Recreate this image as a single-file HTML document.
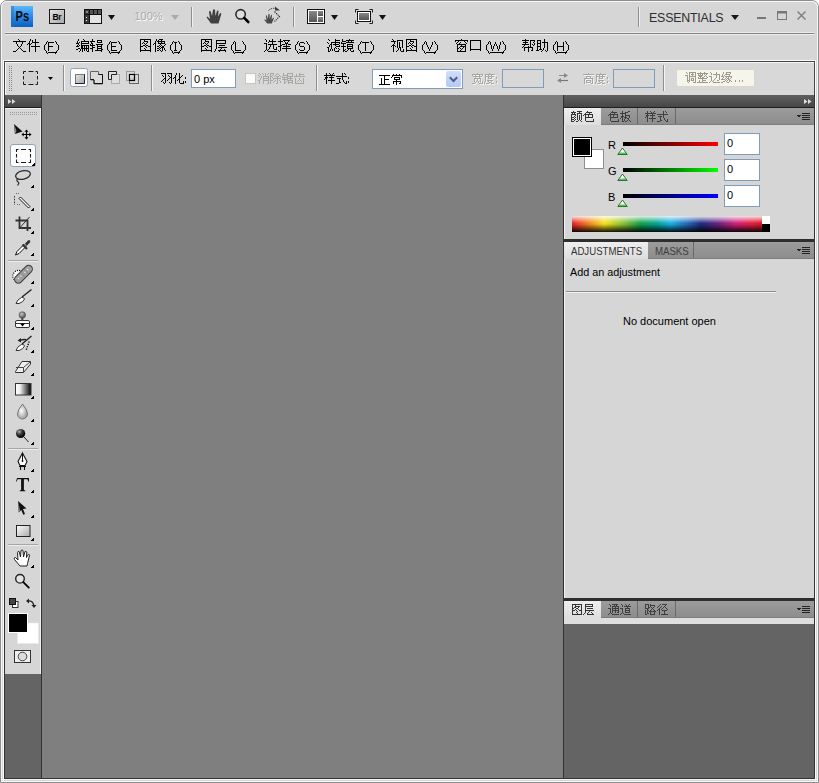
<!DOCTYPE html>
<html><head><meta charset="utf-8"><style>
html,body{margin:0;padding:0;width:819px;height:783px;overflow:hidden;background:#fff}
.a{position:absolute;display:block}
.t{position:absolute;white-space:nowrap;font-family:"Liberation Sans",sans-serif;line-height:1}
</style></head><body>
<div class="a" style="left:0px;top:0px;width:819px;height:783px;background:#d6d6d6;border:1px solid #8e8e8e;box-sizing:border-box;border-radius:7px 7px 0 0"></div><div class="a" style="left:1px;top:1px;width:817px;height:781px;border:1px solid #f6f6f6;border-bottom:none;box-sizing:border-box;border-radius:6px 6px 0 0"></div><div class="a" style="left:5px;top:32px;width:809px;height:1px;background:#ececec"></div><div class="a" style="left:5px;top:33px;width:809px;height:1px;background:#808080"></div><div class="a" style="left:5px;top:34px;width:809px;height:1px;background:#eeeeee"></div><div class="a" style="left:3px;top:60px;width:813px;height:722px;border:1px solid #fafafa;box-sizing:border-box"></div><div class="a" style="left:1px;top:779px;width:817px;height:1px;background:#f6f6f6"></div><div class="a" style="left:1px;top:781px;width:817px;height:1px;background:#f6f6f6"></div><div class="a" style="left:4px;top:61px;width:811px;height:34px;background:#d8d8d8;border:1px solid #464646;border-bottom:none;box-sizing:border-box"></div><div class="a" style="left:5px;top:62px;width:809px;height:1px;background:#f6f6f6"></div><div class="a" style="left:5px;top:62px;width:1px;height:33px;background:#f6f6f6"></div><div class="a" style="left:4px;top:95px;width:811px;height:684px;background:#333"></div><div class="a" style="left:5px;top:95px;width:36px;height:12px;background:linear-gradient(#5f5f5f,#474747)"></div><div class="a" style="left:5px;top:107px;width:36px;height:1px;background:#1e1e1e"></div><div class="a" style="left:5px;top:108px;width:36px;height:566px;background:#d6d6d6"></div><div class="a" style="left:5px;top:108px;width:35px;height:1px;background:#f2f2f2"></div><div class="a" style="left:40px;top:108px;width:1px;height:566px;background:#efefef"></div><div class="a" style="left:5px;top:674px;width:36px;height:104px;background:#646464"></div><div class="a" style="left:42px;top:95px;width:521px;height:683px;background:#7f7f7f"></div><div class="a" style="left:564px;top:95px;width:250px;height:12px;background:linear-gradient(#5f5f5f,#474747)"></div><div class="a" style="left:564px;top:107px;width:250px;height:1px;background:#1e1e1e"></div><div class="a" style="left:564px;top:108px;width:250px;height:17px;background:linear-gradient(#9c9c9c,#8c8c8c)"></div><div class="a" style="left:564px;top:124px;width:250px;height:1px;background:#7c7c7c"></div><div class="a" style="left:564px;top:108px;width:37px;height:17px;background:linear-gradient(#eeeeee,#dedede)"></div><svg class="a" style="left:571px;top:109px" width="29" height="19" shape-rendering="crispEdges"><path fill="#333" d="M2 2h1v1h-1zM6 2h5v1h-5zM16 2h1v1h-1zM0 3h5v1h-5zM8 3h1v1h-1zM15 3h6v1h-6zM1 4h1v1h-1zM3 4h1v1h-1zM6 4h5v1h-5zM14 4h1v1h-1zM18 4h1v1h-1zM0 5h5v1h-5zM6 5h1v1h-1zM10 5h1v1h-1zM13 5h9v1h-9zM0 6h1v1h-1zM4 6h1v1h-1zM6 6h1v1h-1zM8 6h1v1h-1zM10 6h1v1h-1zM12 6h1v1h-1zM14 6h1v1h-1zM17 6h1v1h-1zM21 6h1v1h-1zM0 7h1v1h-1zM3 7h1v1h-1zM6 7h1v1h-1zM8 7h1v1h-1zM10 7h1v1h-1zM14 7h1v1h-1zM17 7h1v1h-1zM21 7h1v1h-1zM0 8h3v1h-3zM4 8h1v1h-1zM6 8h1v1h-1zM8 8h1v1h-1zM10 8h1v1h-1zM14 8h8v1h-8zM0 9h1v1h-1zM3 9h1v1h-1zM6 9h1v1h-1zM8 9h1v1h-1zM10 9h1v1h-1zM14 9h1v1h-1zM0 10h3v1h-3zM4 10h1v1h-1zM6 10h1v1h-1zM8 10h1v1h-1zM10 10h1v1h-1zM14 10h1v1h-1zM22 10h1v1h-1zM0 11h1v1h-1zM3 11h1v1h-1zM7 11h1v1h-1zM9 11h1v1h-1zM14 11h1v1h-1zM22 11h1v1h-1zM0 12h3v1h-3zM5 12h2v1h-2zM10 12h1v1h-1zM15 12h8v1h-8z"/></svg><div class="a" style="left:637px;top:108px;width:1px;height:16px;background:#6a6a6a"></div><svg class="a" style="left:608px;top:109px" width="29" height="19" shape-rendering="crispEdges"><path fill="#3e3e3e" d="M4 2h1v1h-1zM14 2h1v1h-1zM20 2h2v1h-2zM3 3h6v1h-6zM14 3h1v1h-1zM17 3h3v1h-3zM2 4h1v1h-1zM6 4h1v1h-1zM12 4h6v1h-6zM1 5h9v1h-9zM14 5h1v1h-1zM17 5h1v1h-1zM0 6h1v1h-1zM2 6h1v1h-1zM5 6h1v1h-1zM9 6h1v1h-1zM14 6h1v1h-1zM17 6h5v1h-5zM2 7h1v1h-1zM5 7h1v1h-1zM9 7h1v1h-1zM13 7h3v1h-3zM17 7h1v1h-1zM21 7h1v1h-1zM2 8h8v1h-8zM13 8h2v1h-2zM16 8h3v1h-3zM21 8h1v1h-1zM2 9h1v1h-1zM12 9h1v1h-1zM14 9h1v1h-1zM17 9h1v1h-1zM19 9h2v1h-2zM2 10h1v1h-1zM10 10h1v1h-1zM14 10h1v1h-1zM16 10h1v1h-1zM20 10h1v1h-1zM2 11h1v1h-1zM10 11h1v1h-1zM14 11h1v1h-1zM16 11h1v1h-1zM19 11h1v1h-1zM21 11h1v1h-1zM3 12h8v1h-8zM14 12h2v1h-2zM17 12h2v1h-2zM22 12h1v1h-1z"/></svg><div class="a" style="left:675px;top:108px;width:1px;height:16px;background:#6a6a6a"></div><svg class="a" style="left:645px;top:109px" width="29" height="19" shape-rendering="crispEdges"><path fill="#3e3e3e" d="M2 2h1v1h-1zM5 2h1v1h-1zM9 2h1v1h-1zM18 2h1v1h-1zM20 2h1v1h-1zM2 3h1v1h-1zM6 3h1v1h-1zM8 3h1v1h-1zM18 3h1v1h-1zM21 3h1v1h-1zM0 4h11v1h-11zM18 4h1v1h-1zM2 5h1v1h-1zM7 5h1v1h-1zM12 5h11v1h-11zM1 6h3v1h-3zM5 6h5v1h-5zM18 6h1v1h-1zM1 7h2v1h-2zM7 7h1v1h-1zM13 7h4v1h-4zM18 7h1v1h-1zM0 8h1v1h-1zM2 8h1v1h-1zM7 8h1v1h-1zM15 8h1v1h-1zM18 8h1v1h-1zM2 9h1v1h-1zM4 9h7v1h-7zM15 9h1v1h-1zM19 9h1v1h-1zM2 10h1v1h-1zM7 10h1v1h-1zM15 10h1v1h-1zM19 10h1v1h-1zM22 10h1v1h-1zM2 11h1v1h-1zM7 11h1v1h-1zM15 11h2v1h-2zM20 11h1v1h-1zM22 11h1v1h-1zM2 12h1v1h-1zM7 12h1v1h-1zM12 12h3v1h-3zM21 12h2v1h-2z"/></svg><svg class="a" style="left:796px;top:112px" width="16" height="9" viewBox="0 0 16 9" shape-rendering="crispEdges"><path d="M0.5 3h5l-2.5 2.8z" fill="#222"/><path d="M6 1h8v1h-8zM6 3h8v1h-8zM6 5h8v1h-8zM6 7h8v1h-8z" fill="#222"/></svg><div class="a" style="left:564px;top:125px;width:250px;height:114px;background:#d6d6d6"></div><div class="a" style="left:564px;top:125px;width:1px;height:114px;background:#f2f2f2"></div><div class="a" style="left:564px;top:239px;width:250px;height:3px;background:#2e2e2e"></div><div class="a" style="left:564px;top:242px;width:250px;height:17px;background:linear-gradient(#9c9c9c,#8c8c8c)"></div><div class="a" style="left:564px;top:258px;width:250px;height:1px;background:#7c7c7c"></div><div class="a" style="left:564px;top:242px;width:84px;height:17px;background:linear-gradient(#eeeeee,#dedede)"></div><div class="t" style="left:571px;top:246px;color:#333;font-size:11px;transform:scaleX(0.875);transform-origin:0 0">ADJUSTMENTS</div><div class="a" style="left:693px;top:242px;width:1px;height:16px;background:#6a6a6a"></div><div class="t" style="left:655px;top:246px;color:#3e3e3e;font-size:11px;transform:scaleX(0.875);transform-origin:0 0">MASKS</div><svg class="a" style="left:796px;top:246px" width="16" height="9" viewBox="0 0 16 9" shape-rendering="crispEdges"><path d="M0.5 3h5l-2.5 2.8z" fill="#222"/><path d="M6 1h8v1h-8zM6 3h8v1h-8zM6 5h8v1h-8zM6 7h8v1h-8z" fill="#222"/></svg><div class="a" style="left:564px;top:259px;width:250px;height:339px;background:#d6d6d6"></div><div class="a" style="left:564px;top:259px;width:1px;height:339px;background:#f2f2f2"></div><div class="a" style="left:564px;top:598px;width:250px;height:3px;background:#2e2e2e"></div><div class="a" style="left:564px;top:601px;width:250px;height:17px;background:linear-gradient(#9c9c9c,#8c8c8c)"></div><div class="a" style="left:564px;top:617px;width:250px;height:1px;background:#7c7c7c"></div><div class="a" style="left:564px;top:601px;width:37px;height:17px;background:linear-gradient(#eeeeee,#dedede)"></div><svg class="a" style="left:571px;top:602px" width="29" height="19" shape-rendering="crispEdges"><path fill="#333" d="M1 2h10v1h-10zM14 2h8v1h-8zM1 3h1v1h-1zM4 3h1v1h-1zM10 3h1v1h-1zM14 3h1v1h-1zM21 3h1v1h-1zM1 4h1v1h-1zM4 4h5v1h-5zM10 4h1v1h-1zM14 4h8v1h-8zM1 5h1v1h-1zM3 5h2v1h-2zM7 5h1v1h-1zM10 5h1v1h-1zM14 5h1v1h-1zM1 6h2v1h-2zM5 6h2v1h-2zM10 6h1v1h-1zM14 6h1v1h-1zM16 6h6v1h-6zM1 7h1v1h-1zM4 7h1v1h-1zM7 7h1v1h-1zM10 7h1v1h-1zM14 7h1v1h-1zM1 8h3v1h-3zM5 8h1v1h-1zM8 8h3v1h-3zM14 8h9v1h-9zM1 9h1v1h-1zM6 9h1v1h-1zM10 9h1v1h-1zM14 9h1v1h-1zM18 9h1v1h-1zM1 10h1v1h-1zM5 10h1v1h-1zM10 10h1v1h-1zM14 10h1v1h-1zM17 10h1v1h-1zM20 10h1v1h-1zM1 11h1v1h-1zM6 11h1v1h-1zM10 11h1v1h-1zM13 11h1v1h-1zM16 11h1v1h-1zM21 11h1v1h-1zM1 12h10v1h-10zM12 12h1v1h-1zM16 12h7v1h-7z"/></svg><div class="a" style="left:637px;top:601px;width:1px;height:16px;background:#6a6a6a"></div><svg class="a" style="left:608px;top:602px" width="29" height="19" shape-rendering="crispEdges"><path fill="#3e3e3e" d="M1 2h1v1h-1zM4 2h6v1h-6zM13 2h1v1h-1zM17 2h1v1h-1zM21 2h1v1h-1zM2 3h1v1h-1zM6 3h1v1h-1zM8 3h1v1h-1zM14 3h1v1h-1zM18 3h1v1h-1zM20 3h1v1h-1zM2 4h1v1h-1zM4 4h7v1h-7zM14 4h1v1h-1zM16 4h7v1h-7zM4 5h1v1h-1zM7 5h1v1h-1zM10 5h1v1h-1zM19 5h1v1h-1zM0 6h3v1h-3zM4 6h7v1h-7zM12 6h3v1h-3zM17 6h5v1h-5zM2 7h1v1h-1zM4 7h1v1h-1zM7 7h1v1h-1zM10 7h1v1h-1zM14 7h1v1h-1zM17 7h1v1h-1zM21 7h1v1h-1zM2 8h1v1h-1zM4 8h7v1h-7zM14 8h1v1h-1zM17 8h5v1h-5zM2 9h1v1h-1zM4 9h1v1h-1zM7 9h1v1h-1zM10 9h1v1h-1zM14 9h1v1h-1zM17 9h1v1h-1zM21 9h1v1h-1zM2 10h1v1h-1zM4 10h1v1h-1zM7 10h1v1h-1zM9 10h2v1h-2zM14 10h1v1h-1zM17 10h5v1h-5zM1 11h1v1h-1zM3 11h1v1h-1zM13 11h1v1h-1zM15 11h1v1h-1zM0 12h1v1h-1zM4 12h7v1h-7zM12 12h1v1h-1zM16 12h7v1h-7z"/></svg><div class="a" style="left:675px;top:601px;width:1px;height:16px;background:#6a6a6a"></div><svg class="a" style="left:645px;top:602px" width="29" height="19" shape-rendering="crispEdges"><path fill="#3e3e3e" d="M0 2h4v1h-4zM5 2h1v1h-1zM15 2h1v1h-1zM17 2h5v1h-5zM0 3h1v1h-1zM3 3h1v1h-1zM5 3h5v1h-5zM14 3h1v1h-1zM20 3h1v1h-1zM0 4h1v1h-1zM3 4h1v1h-1zM5 4h1v1h-1zM9 4h1v1h-1zM13 4h1v1h-1zM16 4h1v1h-1zM19 4h1v1h-1zM0 5h1v1h-1zM3 5h2v1h-2zM6 5h1v1h-1zM8 5h1v1h-1zM12 5h1v1h-1zM15 5h1v1h-1zM18 5h1v1h-1zM20 5h1v1h-1zM0 6h4v1h-4zM7 6h1v1h-1zM14 6h1v1h-1zM17 6h1v1h-1zM21 6h1v1h-1zM2 7h1v1h-1zM6 7h1v1h-1zM8 7h1v1h-1zM13 7h2v1h-2zM16 7h1v1h-1zM22 7h1v1h-1zM0 8h1v1h-1zM2 8h2v1h-2zM5 8h1v1h-1zM9 8h1v1h-1zM12 8h1v1h-1zM14 8h1v1h-1zM17 8h5v1h-5zM0 9h1v1h-1zM2 9h1v1h-1zM4 9h7v1h-7zM14 9h1v1h-1zM19 9h1v1h-1zM0 10h1v1h-1zM2 10h1v1h-1zM5 10h1v1h-1zM9 10h1v1h-1zM14 10h1v1h-1zM19 10h1v1h-1zM0 11h1v1h-1zM2 11h2v1h-2zM5 11h1v1h-1zM9 11h1v1h-1zM14 11h1v1h-1zM19 11h1v1h-1zM0 12h2v1h-2zM5 12h5v1h-5zM14 12h1v1h-1zM16 12h7v1h-7z"/></svg><svg class="a" style="left:796px;top:605px" width="16" height="9" viewBox="0 0 16 9" shape-rendering="crispEdges"><path d="M0.5 3h5l-2.5 2.8z" fill="#222"/><path d="M6 1h8v1h-8zM6 3h8v1h-8zM6 5h8v1h-8zM6 7h8v1h-8z" fill="#222"/></svg><div class="a" style="left:564px;top:618px;width:250px;height:6px;background:#dedede"></div><div class="a" style="left:564px;top:624px;width:250px;height:154px;background:#646464"></div><svg class="a" style="left:8px;top:99px" width="8" height="5" viewBox="0 0 8 5" ><path d="M0 0l3.5 2.5L0 5zM4 0l3.5 2.5L4 5z" fill="#ddd"/></svg><svg class="a" style="left:804px;top:99px" width="8" height="5" viewBox="0 0 8 5" ><path d="M0 0l3.5 2.5L0 5zM4 0l3.5 2.5L4 5z" fill="#ddd"/></svg><div class="a" style="left:584px;top:149px;width:20px;height:20px;background:#fff;border:1px solid #8e8e8e;box-sizing:border-box"></div><div class="a" style="left:572px;top:137px;width:20px;height:20px;background:#000;box-shadow:inset 0 0 0 1px #000, inset 0 0 0 2px #fff"></div><div class="t" style="left:608px;top:140px;font-size:11px;color:#000">R</div><div class="a" style="left:623px;top:142px;width:95px;height:4px;background:linear-gradient(90deg,#000,#ff0000)"></div><svg class="a" style="left:617px;top:147px" width="11" height="8" viewBox="0 0 11 8" ><path d="M5.5 1L10.2 7.5H0.8Z" fill="#fff" stroke="#2e6e2e" stroke-width="1" stroke-linejoin="round"/><path d="M2 5.6h7v1.2h-7z" fill="#22c022"/></svg><div class="a" style="left:724px;top:133px;width:36px;height:22px;background:#fff;border:1px solid #7f9db9;box-sizing:border-box"></div><div class="t" style="left:727px;top:138px;font-size:11px;color:#000">0</div><div class="t" style="left:608px;top:166px;font-size:11px;color:#000">G</div><div class="a" style="left:623px;top:168px;width:95px;height:4px;background:linear-gradient(90deg,#000,#00ff00)"></div><svg class="a" style="left:617px;top:173px" width="11" height="8" viewBox="0 0 11 8" ><path d="M5.5 1L10.2 7.5H0.8Z" fill="#fff" stroke="#2e6e2e" stroke-width="1" stroke-linejoin="round"/><path d="M2 5.6h7v1.2h-7z" fill="#22c022"/></svg><div class="a" style="left:724px;top:159px;width:36px;height:22px;background:#fff;border:1px solid #7f9db9;box-sizing:border-box"></div><div class="t" style="left:727px;top:164px;font-size:11px;color:#000">0</div><div class="t" style="left:608px;top:192px;font-size:11px;color:#000">B</div><div class="a" style="left:623px;top:194px;width:95px;height:4px;background:linear-gradient(90deg,#000,#0000ff)"></div><svg class="a" style="left:617px;top:199px" width="11" height="8" viewBox="0 0 11 8" ><path d="M5.5 1L10.2 7.5H0.8Z" fill="#fff" stroke="#2e6e2e" stroke-width="1" stroke-linejoin="round"/><path d="M2 5.6h7v1.2h-7z" fill="#22c022"/></svg><div class="a" style="left:724px;top:185px;width:36px;height:22px;background:#fff;border:1px solid #7f9db9;box-sizing:border-box"></div><div class="t" style="left:727px;top:190px;font-size:11px;color:#000">0</div><div class="a" style="left:572px;top:216px;width:190px;height:16px;background:linear-gradient(90deg,#e8202a,#f07a22 8%,#f4e21c 17%,#8cc034 27%,#12a04a 36%,#00a596 45%,#18b0e6 52%,#2466b4 61%,#1e2c80 68%,#6a2280 77%,#d0207a 86%,#e2204c 93%,#d81a22)"></div><div class="a" style="left:572px;top:216px;width:190px;height:16px;background:linear-gradient(rgba(255,255,255,.85),rgba(255,255,255,0) 45%,rgba(0,0,0,0) 50%,rgba(0,0,0,.92))"></div><div class="a" style="left:762px;top:216px;width:8px;height:8px;background:#fff"></div><div class="a" style="left:762px;top:224px;width:8px;height:8px;background:#000"></div><div class="t" style="left:570px;top:267px;font-size:11px;color:#000;transform:scaleX(0.98);transform-origin:0 0">Add an adjustment</div><div class="a" style="left:566px;top:291px;width:210px;height:1px;background:#8e8e8e"></div><div class="a" style="left:566px;top:292px;width:210px;height:1px;background:#f0f0f0"></div><div class="t" style="left:623px;top:316px;font-size:11px;color:#000">No document open</div><svg class="a" style="left:0;top:0" width="819" height="783" viewBox="0 0 819 783"><defs>
<linearGradient id="psg" x1="0" y1="0" x2="0" y2="1"><stop offset="0" stop-color="#5ab8ff"/><stop offset=".5" stop-color="#2a8ae8"/><stop offset="1" stop-color="#0b5fc0"/></linearGradient>
<linearGradient id="brg" x1="0" y1="0" x2="1" y2="1"><stop offset="0" stop-color="#e6e6e6"/><stop offset="1" stop-color="#a6a6a6"/></linearGradient>
<linearGradient id="gg" x1="0" y1="0" x2="0" y2="1"><stop offset="0" stop-color="#888"/><stop offset="1" stop-color="#555"/></linearGradient>
<linearGradient id="wg" x1="0" y1="0" x2="1" y2="1"><stop offset="0" stop-color="#fff"/><stop offset="1" stop-color="#aaa"/></linearGradient>
<linearGradient id="hg" x1="0" y1="0" x2="1" y2="0"><stop offset="0" stop-color="#fff"/><stop offset=".3" stop-color="#eee"/><stop offset="1" stop-color="#000"/></linearGradient>
<radialGradient id="ball" cx=".35" cy=".3" r=".7"><stop offset="0" stop-color="#aaa"/><stop offset=".5" stop-color="#333"/><stop offset="1" stop-color="#000"/></radialGradient>
<radialGradient id="knob" cx=".4" cy=".35" r=".65"><stop offset="0" stop-color="#c8c8c8"/><stop offset="1" stop-color="#4a4a4a"/></radialGradient>
<radialGradient id="drop" cx=".4" cy=".45" r=".6"><stop offset="0" stop-color="#fff"/><stop offset="1" stop-color="#999"/></radialGradient>
</defs><rect x="11" y="6" width="22" height="21" fill="url(#psg)"/><rect x="11" y="6" width="3" height="21" fill="#1f6fc8" opacity=".5"/><text transform="translate(15.6 21) scale(0.8 1)" font-family="Liberation Sans" font-weight="bold" font-size="13.8" fill="#0a0a0a">Ps</text><rect x="49.5" y="9.5" width="15" height="14" fill="url(#brg)" stroke="#1a1a1a"/><text transform="translate(52.6 19.8) scale(0.9 1)" font-family="Liberation Sans" font-weight="bold" font-size="9.6" fill="#000">B</text><text transform="translate(58.2 19.8) scale(0.9 1)" font-family="Liberation Sans" font-weight="bold" font-size="9.6" fill="#111">r</text><rect x="84.5" y="9.5" width="17" height="14" fill="#e4e4e4" stroke="#111"/><rect x="85" y="10" width="16" height="4" fill="#555"/><rect x="85" y="10" width="4" height="13" fill="#3a3a3a"/><path d="M89 10h1v4h-1zM93 10h1v4h-1zM97 10h1v4h-1zM85 14h16v1h-16zM89 14h1v9h-1z" fill="#111"/><path d="M86 11h2v2h-2z" fill="#888"/><path d="M86 17h1v1h-1zM86 20h1v1h-1z" fill="#eee"/><path d="M108 15h7l-3.5 5z" fill="#111"/><text x="135.5" y="21" font-family="Liberation Sans" font-size="11" fill="#fff">100%</text><text x="134.5" y="20" font-family="Liberation Sans" font-size="11" fill="#a9a9a9">100%</text><path d="M171 15h8l-4 5z" fill="#aaa"/><rect x="191" y="7" width="1" height="20" fill="#8e8e8e"/><rect x="192" y="7" width="1" height="20" fill="#f0f0f0"/><rect x="293" y="7" width="1" height="20" fill="#8e8e8e"/><rect x="294" y="7" width="1" height="20" fill="#f0f0f0"/><rect x="638" y="7" width="1" height="20" fill="#8e8e8e"/><rect x="639" y="7" width="1" height="20" fill="#f0f0f0"/><path d="M211 23.5 L207 18 Q206 16.5 207.5 16.5 L210 19 L209 12 Q209 10.5 210.5 11 L212 16 L213 9.8 Q214 8.6 215 9.8 L215.5 16 L217 10.8 Q218.2 10 218.6 11.2 L218 16.5 L220 13.2 Q221.2 12.6 221.3 14 L219 22 L218.5 23.5 Z" fill="#414141"/><circle cx="240.6" cy="14.3" r="4.7" fill="#dedede" stroke="#2c2c2c" stroke-width="1.6"/><path d="M244.2 17.9 L248.3 22" stroke="#000" stroke-width="2.6" stroke-linecap="round"/><path d="M267.2 23.5 L264.5 20.2 Q264 19.2 265 19.4 L266.5 20.5 L265.8 15.8 Q266 15 266.8 15.4 L267.8 19 L268.4 14.2 Q269 13.5 269.6 14.2 L269.8 19 L271 15 Q271.8 14.6 272 15.4 L271.6 19.5 L273.3 17.8 Q274 17.6 273.9 18.4 L272.2 22.5 L271.8 23.5 Z" fill="#4a4a4a"/><path d="M268.5 10.5 Q271 8 275 8.3" fill="none" stroke="#333" stroke-width="1" stroke-dasharray="1.5 1"/><path d="M275 6.5 L280 10.5 L275 10.5 Z" fill="#3c3c3c"/><path d="M274.5 11.5 L279.5 16.5 L274.5 21.5" fill="none" stroke="#333" stroke-width="1.1" stroke-dasharray="1.4 0.8"/><rect x="307.5" y="9.5" width="17" height="14" fill="#fff" stroke="#111"/><rect x="309" y="11" width="8" height="11" fill="url(#gg)"/><rect x="318" y="11" width="5" height="5" fill="url(#gg)"/><rect x="318" y="17" width="5" height="5" fill="url(#gg)"/><path d="M331 15h7l-3.5 5z" fill="#111"/><path d="M355.5 12.5v-3h3M369.5 9.5h3v3M372.5 20.5v3h-3M358.5 23.5h-3v-3" fill="none" stroke="#222"/><rect x="357.5" y="11.5" width="13" height="10" fill="#fff" stroke="#111"/><rect x="359" y="13" width="10" height="7" fill="url(#gg)"/><path d="M379 15h7l-3.5 5z" fill="#111"/><path d="M731 15h8l-4 5z" fill="#1a1a1a"/><rect x="757" y="17" width="9" height="2" fill="#777"/><rect x="777.5" y="11.5" width="9" height="8" fill="none" stroke="#777"/><rect x="778" y="12" width="8" height="1.5" fill="#777"/><path d="M797.5 11.5 L805.5 19.5 M805.5 11.5 L797.5 19.5" stroke="#7a7a7a" stroke-width="1.3"/><rect x="9" y="66" width="1" height="1" fill="#888"/><rect x="11" y="66" width="1" height="1" fill="#888"/><rect x="9" y="68" width="1" height="1" fill="#888"/><rect x="11" y="68" width="1" height="1" fill="#888"/><rect x="9" y="70" width="1" height="1" fill="#888"/><rect x="11" y="70" width="1" height="1" fill="#888"/><rect x="9" y="72" width="1" height="1" fill="#888"/><rect x="11" y="72" width="1" height="1" fill="#888"/><rect x="9" y="74" width="1" height="1" fill="#888"/><rect x="11" y="74" width="1" height="1" fill="#888"/><rect x="9" y="76" width="1" height="1" fill="#888"/><rect x="11" y="76" width="1" height="1" fill="#888"/><rect x="9" y="78" width="1" height="1" fill="#888"/><rect x="11" y="78" width="1" height="1" fill="#888"/><rect x="9" y="80" width="1" height="1" fill="#888"/><rect x="11" y="80" width="1" height="1" fill="#888"/><rect x="9" y="82" width="1" height="1" fill="#888"/><rect x="11" y="82" width="1" height="1" fill="#888"/><rect x="9" y="84" width="1" height="1" fill="#888"/><rect x="11" y="84" width="1" height="1" fill="#888"/><rect x="9" y="86" width="1" height="1" fill="#888"/><rect x="11" y="86" width="1" height="1" fill="#888"/><rect x="9" y="88" width="1" height="1" fill="#888"/><rect x="11" y="88" width="1" height="1" fill="#888"/><rect x="9" y="90" width="1" height="1" fill="#888"/><rect x="11" y="90" width="1" height="1" fill="#888"/><rect x="24" y="72" width="13" height="12" fill="#d0d0d0"/><path d="M23.5 74V71.5H26M28.5 71.5H33.5M35.5 71.5H37.5V74M37.5 76V79.5M37.5 81.5V84.5H35.5M33.5 84.5H28.5M26 84.5H23.5V81.5M23.5 79.5V76" fill="none" stroke="#1a1a1a"/><path d="M48 77h5l-2.5 3z" fill="#000"/><rect x="63" y="65" width="1" height="26" fill="#8e8e8e"/><rect x="64" y="65" width="1" height="26" fill="#f4f4f4"/><rect x="151" y="65" width="1" height="26" fill="#8e8e8e"/><rect x="152" y="65" width="1" height="26" fill="#f4f4f4"/><rect x="316" y="65" width="1" height="26" fill="#8e8e8e"/><rect x="317" y="65" width="1" height="26" fill="#f4f4f4"/><rect x="663" y="65" width="1" height="26" fill="#8e8e8e"/><rect x="664" y="65" width="1" height="26" fill="#f4f4f4"/><rect x="70.5" y="68.5" width="17" height="18" rx="2" fill="#fdfdfd" stroke="#8ea4bb"/><rect x="75" y="74" width="10" height="10" fill="url(#brg)"/><path d="M75 83.5h9.5v-9.5" fill="none" stroke="#222"/><path d="M75.5 83v-8.5h9" fill="none" stroke="#777"/><path d="M90.5 71.5h8v3h4v9.5h-8.5v-4h-3.5z" fill="#dcdcdc" stroke="#666"/><path d="M98.5 74.5h4v9h-8.5v-3.5M90.5 79.5h3.5" fill="none" stroke="#111"/><rect x="111.5" y="74.5" width="8" height="9" fill="#dedede" stroke="#aaa"/><path d="M108.5 71.5h8v3h-5v5h-3z" fill="#e0e0e0" stroke="#222"/><rect x="126.5" y="71.5" width="8" height="9" fill="none" stroke="#999"/><rect x="129.5" y="74.5" width="9" height="9" fill="none" stroke="#666"/><rect x="129.5" y="74.5" width="5" height="6" fill="url(#wg)" stroke="#000" stroke-width="1.2"/><rect x="191.5" y="69.5" width="44" height="18" fill="#fff" stroke="#7f9db9"/><rect x="245.5" y="73.5" width="10" height="10" fill="#fbfbf8" stroke="#c9c7ba"/><rect x="372.5" y="69.5" width="90" height="19" fill="#fff" stroke="#7f9db9"/><defs><linearGradient id="selg" x1="0" y1="0" x2="0" y2="1"><stop offset="0" stop-color="#d2defa"/><stop offset="1" stop-color="#b4c8f2"/></linearGradient></defs><rect x="446" y="71" width="15" height="16" rx="2" fill="url(#selg)"/><path d="M449.8 77.2 L453.5 81 L457.2 77.2" fill="none" stroke="#4d6185" stroke-width="2"/><rect x="502.5" y="69.5" width="41" height="18" fill="#d8d8d8" stroke="#7f9db9"/><rect x="613.5" y="69.5" width="41" height="18" fill="#d8d8d8" stroke="#7f9db9"/><path d="M559 75.5h6" stroke="#8a8a8a" stroke-width="1"/><path d="M564 73 L568 75.5 L564 78z" fill="#8a8a8a"/><path d="M561 80.5h7" stroke="#777" stroke-width="1.2"/><path d="M561 78 L557 80.5 L561 83z" fill="#888"/><rect x="676.5" y="69.5" width="78" height="17" rx="2" fill="#f6f5ec" stroke="#d9d7ca"/><rect x="10" y="112" width="1" height="1" fill="#999"/><rect x="10" y="114" width="1" height="1" fill="#999"/><rect x="12" y="112" width="1" height="1" fill="#999"/><rect x="12" y="114" width="1" height="1" fill="#999"/><rect x="14" y="112" width="1" height="1" fill="#999"/><rect x="14" y="114" width="1" height="1" fill="#999"/><rect x="16" y="112" width="1" height="1" fill="#999"/><rect x="16" y="114" width="1" height="1" fill="#999"/><rect x="18" y="112" width="1" height="1" fill="#999"/><rect x="18" y="114" width="1" height="1" fill="#999"/><rect x="20" y="112" width="1" height="1" fill="#999"/><rect x="20" y="114" width="1" height="1" fill="#999"/><rect x="22" y="112" width="1" height="1" fill="#999"/><rect x="22" y="114" width="1" height="1" fill="#999"/><rect x="24" y="112" width="1" height="1" fill="#999"/><rect x="24" y="114" width="1" height="1" fill="#999"/><rect x="26" y="112" width="1" height="1" fill="#999"/><rect x="26" y="114" width="1" height="1" fill="#999"/><rect x="28" y="112" width="1" height="1" fill="#999"/><rect x="28" y="114" width="1" height="1" fill="#999"/><rect x="30" y="112" width="1" height="1" fill="#999"/><rect x="30" y="114" width="1" height="1" fill="#999"/><rect x="32" y="112" width="1" height="1" fill="#999"/><rect x="32" y="114" width="1" height="1" fill="#999"/><rect x="34" y="112" width="1" height="1" fill="#999"/><rect x="34" y="114" width="1" height="1" fill="#999"/><rect x="36" y="112" width="1" height="1" fill="#999"/><rect x="36" y="114" width="1" height="1" fill="#999"/><path d="M14 124 L22.5 131.5 L15 134 Z" fill="#111"/><path d="M14 124 L15 134 L16.5 131 Z" fill="#888"/><path d="M26.5 130v9M22 134.5h9" stroke="#000" stroke-width="1.2"/><path d="M26.5 129.5l-2 2.2h4zM26.5 139.5l-2-2.2h4zM21.5 134.5l2.2-2v4zM31.5 134.5l-2.2-2v4z" fill="#000"/><rect x="10.5" y="144.5" width="25" height="22" rx="2.5" fill="#fff" stroke="#8ea4bb"/><path d="M16.5 152V149.5H18.5M21 149.5H26M28.5 149.5H30.5V152M30.5 154V157.5M30.5 159.5V162.5H28.5M26 162.5H21M18.5 162.5H16.5V159.5M16.5 157.5V154" fill="none" stroke="#1a1a1a" stroke-width="1.1"/><path shape-rendering="crispEdges" d="M34 163h1v1h-1zM33 164h2v1h-2zM32 165h3v1h-3z" fill="#000"/><ellipse cx="23" cy="175" rx="7.5" ry="4.2" transform="rotate(-12 23 175)" fill="none" stroke="#2a2a2a" stroke-width="1.3"/><path d="M18 178.5 Q16 180 17.5 181.5 Q19.5 182.5 18.5 184 L17.5 185.5" fill="none" stroke="#2a2a2a" stroke-width="1.2"/><path shape-rendering="crispEdges" d="M33 185h1v1h-1zM32 186h2v1h-2zM31 187h3v1h-3z" fill="#000"/><path d="M14.5 196v9" stroke="#333" stroke-dasharray="1.5 1.3"/><path d="M16 193.5h3M17 204.5h3" stroke="#666" stroke-dasharray="1 1"/><path d="M19 198.5 L28.5 208 L30 206.5 L20.5 197 Z" fill="#fff" stroke="#111" stroke-width="1"/><path shape-rendering="crispEdges" d="M33 208h1v1h-1zM32 209h2v1h-2zM31 210h3v1h-3z" fill="#000"/><path d="M15.5 220.5h12v10.5M19.5 216.5v11.5h11.5" fill="none" stroke="#333" stroke-width="1.8"/><path d="M20.5 227 L29.5 217" stroke="#333" stroke-width="1"/><path shape-rendering="crispEdges" d="M33 231h1v1h-1zM32 232h2v1h-2zM31 233h3v1h-3z" fill="#000"/><path d="M15.5 255 L17 251.5 L24 244.5 L26 246.5 L19 253.5 Z" fill="#fff" stroke="#111" stroke-width="1" stroke-linejoin="round"/><path d="M22.5 244.5 L27 249" stroke="#333" stroke-width="2.2"/><path d="M25 243.5 L28 240.5 Q29.5 239.5 30.2 241 Q30.5 242 29.5 243 L26.5 246 Z" fill="#333"/><path shape-rendering="crispEdges" d="M33 253h1v1h-1zM32 254h2v1h-2zM31 255h3v1h-3z" fill="#000"/><rect x="8" y="260" width="30" height="1" fill="#a6a6a6"/><rect x="8" y="261" width="30" height="1" fill="#ececec"/><rect x="8" y="448" width="30" height="1" fill="#a6a6a6"/><rect x="8" y="449" width="30" height="1" fill="#ececec"/><rect x="8" y="544" width="30" height="1" fill="#a6a6a6"/><rect x="8" y="545" width="30" height="1" fill="#ececec"/><circle cx="18.5" cy="276" r="5.6" fill="#fff" stroke="#000" stroke-width="1.2" stroke-dasharray="1 1.2"/><rect x="12.5" y="270.5" width="22" height="7.5" rx="3.75" transform="rotate(-45 23.5 274.25)" fill="#a0a0a0" stroke="#3c3c3c" stroke-width="1"/><path d="M19.5 272 L25 277.5 M23 268.5 L28.5 274" stroke="#777" stroke-width=".8"/><circle cx="18.5" cy="278.5" r=".8" fill="#eee"/><circle cx="21" cy="276" r=".8" fill="#eee"/><circle cx="25" cy="272.2" r=".8" fill="#eee"/><circle cx="27.5" cy="269.5" r=".8" fill="#eee"/><path shape-rendering="crispEdges" d="M33 281h1v1h-1zM32 282h2v1h-2zM31 283h3v1h-3z" fill="#000"/><path d="M22 297 L31.5 289.5" stroke="#222" stroke-width="1.4"/><path d="M16 303.5 Q17.5 299 21.5 297.5 Q24 297 24.5 299 Q23.5 302 19 303.5 Z" fill="#fff" stroke="#333" stroke-width="1"/><path shape-rendering="crispEdges" d="M33 304h1v1h-1zM32 305h2v1h-2zM31 306h3v1h-3z" fill="#000"/><circle cx="22.3" cy="315" r="3.3" fill="url(#knob)" stroke="#555" stroke-width=".6"/><rect x="21.3" y="318" width="2" height="3" fill="#444"/><rect x="15.5" y="320.5" width="14" height="7" rx="1.5" fill="#fff" stroke="#333"/><path d="M15.5 323.5h14" stroke="#333"/><path d="M20 323.5h5l-2.5 3z" fill="#000"/><path shape-rendering="crispEdges" d="M33 327h1v1h-1zM32 328h2v1h-2zM31 329h3v1h-3z" fill="#000"/><path d="M20 340.3 Q23 339.2 26 339.6" fill="none" stroke="#222" stroke-width="1.3"/><path d="M17.5 340.5 L21 338 L21 342.5 Z" fill="#222"/><path d="M22 344 L31.5 336" stroke="#222" stroke-width="1.4"/><path d="M16 350.5 Q17.5 346 21.5 344.5 Q24 344 24.5 346 Q23.5 349 19 350.5 Z" fill="#fff" stroke="#333" stroke-width="1"/><path d="M29.2 341.5 L26.2 350" stroke="#000" stroke-dasharray="1.2 1.3" stroke-width="1.4"/><path shape-rendering="crispEdges" d="M33 350h1v1h-1zM32 351h2v1h-2zM31 352h3v1h-3z" fill="#000"/><path d="M15.5 371.5 L22 361.5 L30.5 361.5 L30.5 364 L23.5 372.5 L15.5 372.5 Z" fill="#eee" stroke="#333" stroke-width="1"/><path d="M16 367.5 L23.5 367.5 L30.5 361.5 M23.5 367.5 L23.5 372" fill="none" stroke="#444" stroke-width="1"/><path shape-rendering="crispEdges" d="M33 373h1v1h-1zM32 374h2v1h-2zM31 375h3v1h-3z" fill="#000"/><rect x="15.5" y="383.5" width="15.5" height="11.5" fill="url(#hg)" stroke="#333" stroke-width="1"/><path shape-rendering="crispEdges" d="M33 396h1v1h-1zM32 397h2v1h-2zM31 398h3v1h-3z" fill="#000"/><path d="M22.5 404 Q27.5 410 27.5 414 A5 5 0 0 1 17.5 414 Q17.5 410 22.5 404 Z" fill="url(#drop)" stroke="#777" stroke-width="1"/><path shape-rendering="crispEdges" d="M33 419h1v1h-1zM32 420h2v1h-2zM31 421h3v1h-3z" fill="#000"/><circle cx="20.6" cy="433.5" r="4.6" fill="url(#ball)"/><path d="M24 437 L28.5 442" stroke="#222" stroke-width="1"/><path shape-rendering="crispEdges" d="M33 442h1v1h-1zM32 443h2v1h-2zM31 444h3v1h-3z" fill="#000"/><path d="M22.5 453 L27 461.5 L25 465.5 L20 465.5 L18 461.5 Z" fill="#fff" stroke="#111" stroke-width="1.1"/><path d="M22.5 453 V460" stroke="#111"/><circle cx="22.5" cy="461" r=".9" fill="#000"/><path d="M19 466.5h7M20.5 467v3M24.5 467v3" stroke="#111" stroke-width="1.1"/><path shape-rendering="crispEdges" d="M33 469h1v1h-1zM32 470h2v1h-2zM31 471h3v1h-3z" fill="#000"/><path d="M17 478h12v3.5h-0.8l-0.7-2.2h-3.6v10.7l1.4 0.6v0.7h-5.6v-0.7l1.4-0.6v-10.7h-3.6l-0.7 2.2h-0.8z" fill="#111"/><path shape-rendering="crispEdges" d="M33 490h1v1h-1zM32 491h2v1h-2zM31 492h3v1h-3z" fill="#000"/><path d="M18 501 L26.5 508.5 L23 509 L25 514 L23.3 514.8 L21.2 510 L18.8 512.5 Z" fill="#111"/><path d="M18 501 L18.8 512.5 L20 510.5 Z" fill="#888"/><path shape-rendering="crispEdges" d="M33 515h1v1h-1zM32 516h2v1h-2zM31 517h3v1h-3z" fill="#000"/><rect x="16.5" y="525.5" width="13.5" height="11" fill="url(#wg)" stroke="#222" stroke-width="1"/><path shape-rendering="crispEdges" d="M33 538h1v1h-1zM32 539h2v1h-2zM31 540h3v1h-3z" fill="#000"/><path d="M20 566 L14.5 559.5 Q13.5 557.5 15.5 557.5 L18 560 L17.5 552.5 Q17.8 551 19.2 551.6 L20.5 557 L21 550.5 Q22 549.5 23 550.5 L23.5 557 L25 551.5 Q26.2 550.8 26.8 552 L26.5 557.5 L28.3 554.5 Q29.5 554 29.6 555.3 L27.5 563.5 L27 566 Z" fill="#fff" stroke="#222" stroke-width="1"/><path shape-rendering="crispEdges" d="M33 565h1v1h-1zM32 566h2v1h-2zM31 567h3v1h-3z" fill="#000"/><circle cx="20" cy="578.8" r="4.3" fill="#e4e4e4" stroke="#222" stroke-width="1.4"/><path d="M23.3 582.2 L28.8 587.6" stroke="#000" stroke-width="1.8" stroke-linecap="round"/><rect x="12.5" y="601.5" width="5.5" height="6" fill="#fff" stroke="#333"/><rect x="9" y="598" width="7" height="7" fill="#111"/><rect x="10" y="599" width="5" height="5" fill="#444"/><path d="M27.5 601 Q33 600 34 606" fill="none" stroke="#222" stroke-width="1.4"/><path d="M26 601 L29 598.5 L29 603.5 Z M34 608 L31.5 605 L36.5 605 Z" fill="#222"/><rect x="17.5" y="623" width="21" height="20.5" fill="#fff" stroke="#e8e8e8" stroke-width=".5"/><rect x="8.5" y="613.5" width="19" height="19" fill="#000" stroke="#fff" stroke-width="1"/><rect x="14.5" y="650.5" width="16" height="12" fill="#eee" stroke="#333"/><circle cx="22.5" cy="656.5" r="4.3" fill="#ddd" stroke="#444"/></svg><div class="t" style="left:649px;top:12px;font-size:12.4px;color:#2e2e2e;letter-spacing:-0.2px">ESSENTIALS</div><svg class="a" style="left:13px;top:37px" width="33" height="21" shape-rendering="crispEdges"><path fill="#000" d="M5 2h1v1h-1zM17 2h1v1h-1zM22 2h1v1h-1zM6 3h1v1h-1zM17 3h1v1h-1zM19 3h1v1h-1zM22 3h1v1h-1zM0 4h13v1h-13zM16 4h1v1h-1zM19 4h1v1h-1zM22 4h1v1h-1zM3 5h1v1h-1zM9 5h1v1h-1zM16 5h1v1h-1zM19 5h7v1h-7zM3 6h1v1h-1zM9 6h1v1h-1zM15 6h2v1h-2zM18 6h1v1h-1zM22 6h1v1h-1zM4 7h1v1h-1zM8 7h1v1h-1zM14 7h1v1h-1zM16 7h2v1h-2zM22 7h1v1h-1zM4 8h1v1h-1zM8 8h1v1h-1zM16 8h1v1h-1zM22 8h1v1h-1zM5 9h1v1h-1zM7 9h1v1h-1zM16 9h1v1h-1zM18 9h9v1h-9zM6 10h1v1h-1zM16 10h1v1h-1zM22 10h1v1h-1zM5 11h1v1h-1zM7 11h1v1h-1zM16 11h1v1h-1zM22 11h1v1h-1zM4 12h1v1h-1zM8 12h1v1h-1zM16 12h1v1h-1zM22 12h1v1h-1zM3 13h1v1h-1zM9 13h1v1h-1zM16 13h1v1h-1zM22 13h1v1h-1zM0 14h3v1h-3zM10 14h3v1h-3zM16 14h1v1h-1zM22 14h1v1h-1z"/></svg><svg class="a" style="left:0;top:0" width="600" height="60" shape-rendering="crispEdges"><path fill="#000" d="M47 41h1v1h-1zM46 42h1v1h-1zM46 43h1v1h-1zM45 44h1v1h-1zM44 45h1v1h-1zM44 46h1v1h-1zM44 47h1v1h-1zM44 48h1v1h-1zM44 49h1v1h-1zM45 50h1v1h-1zM46 51h1v1h-1zM46 52h1v1h-1zM47 53h1v1h-1zM48 42h6v1h-6zM48 43h1v1h-1zM48 44h1v1h-1zM48 45h1v1h-1zM48 46h5v1h-5zM48 47h1v1h-1zM48 48h1v1h-1zM48 49h1v1h-1zM48 50h1v1h-1zM48 52h8v1h-8zM55 41h1v1h-1zM56 42h1v1h-1zM56 43h1v1h-1zM57 44h1v1h-1zM58 45h1v1h-1zM58 46h1v1h-1zM58 47h1v1h-1zM58 48h1v1h-1zM58 49h1v1h-1zM57 50h1v1h-1zM56 51h1v1h-1zM56 52h1v1h-1zM55 53h1v1h-1z"/></svg><svg class="a" style="left:76px;top:37px" width="33" height="21" shape-rendering="crispEdges"><path fill="#000" d="M2 2h1v1h-1zM7 2h1v1h-1zM16 2h1v1h-1zM2 3h1v1h-1zM8 3h1v1h-1zM16 3h1v1h-1zM21 3h5v1h-5zM1 4h1v1h-1zM5 4h8v1h-8zM14 4h5v1h-5zM21 4h1v1h-1zM25 4h1v1h-1zM1 5h1v1h-1zM3 5h1v1h-1zM5 5h1v1h-1zM12 5h1v1h-1zM15 5h1v1h-1zM21 5h5v1h-5zM0 6h3v1h-3zM5 6h8v1h-8zM15 6h2v1h-2zM2 7h1v1h-1zM5 7h1v1h-1zM14 7h1v1h-1zM16 7h1v1h-1zM20 7h7v1h-7zM1 8h1v1h-1zM3 8h1v1h-1zM5 8h8v1h-8zM14 8h5v1h-5zM21 8h1v1h-1zM25 8h1v1h-1zM0 9h3v1h-3zM5 9h2v1h-2zM8 9h1v1h-1zM10 9h1v1h-1zM12 9h1v1h-1zM16 9h1v1h-1zM21 9h5v1h-5zM5 10h2v1h-2zM8 10h1v1h-1zM10 10h1v1h-1zM12 10h1v1h-1zM16 10h3v1h-3zM21 10h1v1h-1zM25 10h1v1h-1zM2 11h2v1h-2zM5 11h8v1h-8zM14 11h3v1h-3zM21 11h5v1h-5zM0 12h2v1h-2zM4 12h1v1h-1zM6 12h1v1h-1zM8 12h1v1h-1zM10 12h1v1h-1zM12 12h1v1h-1zM16 12h1v1h-1zM21 12h1v1h-1zM25 12h2v1h-2zM4 13h1v1h-1zM6 13h1v1h-1zM8 13h1v1h-1zM10 13h1v1h-1zM12 13h1v1h-1zM16 13h1v1h-1zM19 13h7v1h-7zM3 14h1v1h-1zM6 14h1v1h-1zM11 14h2v1h-2zM16 14h1v1h-1zM25 14h1v1h-1z"/></svg><svg class="a" style="left:0;top:0" width="600" height="60" shape-rendering="crispEdges"><path fill="#000" d="M110 41h1v1h-1zM109 42h1v1h-1zM109 43h1v1h-1zM108 44h1v1h-1zM107 45h1v1h-1zM107 46h1v1h-1zM107 47h1v1h-1zM107 48h1v1h-1zM107 49h1v1h-1zM108 50h1v1h-1zM109 51h1v1h-1zM109 52h1v1h-1zM110 53h1v1h-1zM111 42h6v1h-6zM111 43h1v1h-1zM111 44h1v1h-1zM111 45h1v1h-1zM111 46h5v1h-5zM111 47h1v1h-1zM111 48h1v1h-1zM111 49h1v1h-1zM111 50h6v1h-6zM111 52h8v1h-8zM118 41h1v1h-1zM119 42h1v1h-1zM119 43h1v1h-1zM120 44h1v1h-1zM121 45h1v1h-1zM121 46h1v1h-1zM121 47h1v1h-1zM121 48h1v1h-1zM121 49h1v1h-1zM120 50h1v1h-1zM119 51h1v1h-1zM119 52h1v1h-1zM118 53h1v1h-1z"/></svg><svg class="a" style="left:139px;top:37px" width="33" height="21" shape-rendering="crispEdges"><path fill="#000" d="M1 2h11v1h-11zM17 2h1v1h-1zM20 2h4v1h-4zM1 3h1v1h-1zM5 3h1v1h-1zM11 3h1v1h-1zM17 3h1v1h-1zM19 3h1v1h-1zM22 3h1v1h-1zM1 4h1v1h-1zM5 4h4v1h-4zM11 4h1v1h-1zM16 4h1v1h-1zM18 4h8v1h-8zM1 5h1v1h-1zM4 5h1v1h-1zM8 5h1v1h-1zM11 5h1v1h-1zM16 5h1v1h-1zM19 5h1v1h-1zM22 5h1v1h-1zM25 5h1v1h-1zM1 6h1v1h-1zM3 6h1v1h-1zM5 6h1v1h-1zM7 6h1v1h-1zM11 6h1v1h-1zM15 6h2v1h-2zM19 6h7v1h-7zM1 7h1v1h-1zM6 7h1v1h-1zM11 7h1v1h-1zM14 7h1v1h-1zM16 7h1v1h-1zM21 7h1v1h-1zM26 7h1v1h-1zM1 8h1v1h-1zM4 8h2v1h-2zM7 8h2v1h-2zM11 8h1v1h-1zM16 8h1v1h-1zM20 8h1v1h-1zM22 8h1v1h-1zM25 8h1v1h-1zM1 9h3v1h-3zM6 9h1v1h-1zM9 9h3v1h-3zM16 9h1v1h-1zM18 9h2v1h-2zM21 9h1v1h-1zM23 9h2v1h-2zM1 10h1v1h-1zM7 10h1v1h-1zM11 10h1v1h-1zM16 10h1v1h-1zM20 10h1v1h-1zM22 10h3v1h-3zM1 11h1v1h-1zM5 11h1v1h-1zM11 11h1v1h-1zM16 11h1v1h-1zM18 11h2v1h-2zM21 11h1v1h-1zM23 11h1v1h-1zM25 11h1v1h-1zM1 12h1v1h-1zM6 12h1v1h-1zM11 12h1v1h-1zM16 12h1v1h-1zM20 12h1v1h-1zM23 12h1v1h-1zM25 12h1v1h-1zM1 13h11v1h-11zM16 13h1v1h-1zM18 13h2v1h-2zM21 13h1v1h-1zM23 13h1v1h-1zM26 13h1v1h-1zM1 14h1v1h-1zM11 14h1v1h-1zM16 14h1v1h-1zM22 14h1v1h-1z"/></svg><svg class="a" style="left:0;top:0" width="600" height="60" shape-rendering="crispEdges"><path fill="#000" d="M173 41h1v1h-1zM172 42h1v1h-1zM172 43h1v1h-1zM171 44h1v1h-1zM170 45h1v1h-1zM170 46h1v1h-1zM170 47h1v1h-1zM170 48h1v1h-1zM170 49h1v1h-1zM171 50h1v1h-1zM172 51h1v1h-1zM172 52h1v1h-1zM173 53h1v1h-1zM174 42h3v1h-3zM175 43h1v1h-1zM175 44h1v1h-1zM175 45h1v1h-1zM175 46h1v1h-1zM175 47h1v1h-1zM175 48h1v1h-1zM175 49h1v1h-1zM174 50h3v1h-3zM174 52h5v1h-5zM178 41h1v1h-1zM179 42h1v1h-1zM179 43h1v1h-1zM180 44h1v1h-1zM181 45h1v1h-1zM181 46h1v1h-1zM181 47h1v1h-1zM181 48h1v1h-1zM181 49h1v1h-1zM180 50h1v1h-1zM179 51h1v1h-1zM179 52h1v1h-1zM178 53h1v1h-1z"/></svg><svg class="a" style="left:200px;top:37px" width="33" height="21" shape-rendering="crispEdges"><path fill="#000" d="M1 2h11v1h-11zM1 3h1v1h-1zM5 3h1v1h-1zM11 3h1v1h-1zM16 3h10v1h-10zM1 4h1v1h-1zM5 4h4v1h-4zM11 4h1v1h-1zM16 4h1v1h-1zM25 4h1v1h-1zM1 5h1v1h-1zM4 5h1v1h-1zM8 5h1v1h-1zM11 5h1v1h-1zM16 5h1v1h-1zM25 5h1v1h-1zM1 6h1v1h-1zM3 6h1v1h-1zM5 6h1v1h-1zM7 6h1v1h-1zM11 6h1v1h-1zM16 6h10v1h-10zM1 7h1v1h-1zM6 7h1v1h-1zM11 7h1v1h-1zM16 7h1v1h-1zM1 8h1v1h-1zM4 8h2v1h-2zM7 8h2v1h-2zM11 8h1v1h-1zM16 8h1v1h-1zM19 8h6v1h-6zM1 9h3v1h-3zM6 9h1v1h-1zM9 9h3v1h-3zM16 9h1v1h-1zM1 10h1v1h-1zM7 10h1v1h-1zM11 10h1v1h-1zM16 10h1v1h-1zM18 10h9v1h-9zM1 11h1v1h-1zM5 11h1v1h-1zM11 11h1v1h-1zM16 11h1v1h-1zM21 11h1v1h-1zM1 12h1v1h-1zM6 12h1v1h-1zM11 12h1v1h-1zM15 12h1v1h-1zM20 12h1v1h-1zM24 12h1v1h-1zM1 13h11v1h-11zM15 13h1v1h-1zM18 13h8v1h-8zM1 14h1v1h-1zM11 14h1v1h-1zM14 14h1v1h-1zM19 14h1v1h-1zM25 14h1v1h-1z"/></svg><svg class="a" style="left:0;top:0" width="600" height="60" shape-rendering="crispEdges"><path fill="#000" d="M234 41h1v1h-1zM233 42h1v1h-1zM233 43h1v1h-1zM232 44h1v1h-1zM231 45h1v1h-1zM231 46h1v1h-1zM231 47h1v1h-1zM231 48h1v1h-1zM231 49h1v1h-1zM232 50h1v1h-1zM233 51h1v1h-1zM233 52h1v1h-1zM234 53h1v1h-1zM235 42h1v1h-1zM235 43h1v1h-1zM235 44h1v1h-1zM235 45h1v1h-1zM235 46h1v1h-1zM235 47h1v1h-1zM235 48h1v1h-1zM235 49h1v1h-1zM235 50h6v1h-6zM235 52h8v1h-8zM242 41h1v1h-1zM243 42h1v1h-1zM243 43h1v1h-1zM244 44h1v1h-1zM245 45h1v1h-1zM245 46h1v1h-1zM245 47h1v1h-1zM245 48h1v1h-1zM245 49h1v1h-1zM244 50h1v1h-1zM243 51h1v1h-1zM243 52h1v1h-1zM242 53h1v1h-1z"/></svg><svg class="a" style="left:264px;top:37px" width="33" height="21" shape-rendering="crispEdges"><path fill="#000" d="M1 2h1v1h-1zM8 2h1v1h-1zM16 2h1v1h-1zM2 3h1v1h-1zM5 3h1v1h-1zM8 3h1v1h-1zM16 3h1v1h-1zM19 3h7v1h-7zM2 4h1v1h-1zM5 4h7v1h-7zM14 4h5v1h-5zM20 4h1v1h-1zM24 4h1v1h-1zM4 5h1v1h-1zM8 5h1v1h-1zM16 5h1v1h-1zM21 5h1v1h-1zM23 5h1v1h-1zM0 6h3v1h-3zM8 6h1v1h-1zM16 6h1v1h-1zM21 6h3v1h-3zM2 7h1v1h-1zM4 7h9v1h-9zM16 7h1v1h-1zM18 7h3v1h-3zM22 7h1v1h-1zM24 7h3v1h-3zM2 8h1v1h-1zM6 8h1v1h-1zM9 8h1v1h-1zM16 8h2v1h-2zM22 8h1v1h-1zM2 9h1v1h-1zM6 9h1v1h-1zM9 9h1v1h-1zM14 9h3v1h-3zM19 9h7v1h-7zM2 10h1v1h-1zM5 10h1v1h-1zM9 10h1v1h-1zM12 10h1v1h-1zM16 10h1v1h-1zM22 10h1v1h-1zM2 11h1v1h-1zM5 11h1v1h-1zM9 11h1v1h-1zM12 11h1v1h-1zM16 11h1v1h-1zM18 11h9v1h-9zM2 12h1v1h-1zM4 12h1v1h-1zM10 12h3v1h-3zM16 12h1v1h-1zM22 12h1v1h-1zM1 13h1v1h-1zM3 13h1v1h-1zM14 13h1v1h-1zM16 13h1v1h-1zM22 13h1v1h-1zM0 14h1v1h-1zM4 14h9v1h-9zM15 14h1v1h-1zM22 14h1v1h-1z"/></svg><svg class="a" style="left:0;top:0" width="600" height="60" shape-rendering="crispEdges"><path fill="#000" d="M298 41h1v1h-1zM297 42h1v1h-1zM297 43h1v1h-1zM296 44h1v1h-1zM295 45h1v1h-1zM295 46h1v1h-1zM295 47h1v1h-1zM295 48h1v1h-1zM295 49h1v1h-1zM296 50h1v1h-1zM297 51h1v1h-1zM297 52h1v1h-1zM298 53h1v1h-1zM300 42h4v1h-4zM299 43h1v1h-1zM304 43h1v1h-1zM299 44h1v1h-1zM299 45h1v1h-1zM300 46h4v1h-4zM304 47h1v1h-1zM304 48h1v1h-1zM299 49h1v1h-1zM304 49h1v1h-1zM300 50h4v1h-4zM299 52h8v1h-8zM306 41h1v1h-1zM307 42h1v1h-1zM307 43h1v1h-1zM308 44h1v1h-1zM309 45h1v1h-1zM309 46h1v1h-1zM309 47h1v1h-1zM309 48h1v1h-1zM309 49h1v1h-1zM308 50h1v1h-1zM307 51h1v1h-1zM307 52h1v1h-1zM306 53h1v1h-1z"/></svg><svg class="a" style="left:327px;top:37px" width="33" height="21" shape-rendering="crispEdges"><path fill="#000" d="M1 2h1v1h-1zM8 2h1v1h-1zM15 2h1v1h-1zM22 2h1v1h-1zM2 3h1v1h-1zM8 3h5v1h-5zM15 3h1v1h-1zM19 3h8v1h-8zM8 4h1v1h-1zM15 4h4v1h-4zM21 4h1v1h-1zM24 4h1v1h-1zM0 5h1v1h-1zM4 5h9v1h-9zM14 5h1v1h-1zM19 5h8v1h-8zM1 6h1v1h-1zM4 6h1v1h-1zM8 6h1v1h-1zM12 6h1v1h-1zM14 6h5v1h-5zM3 7h2v1h-2zM6 7h6v1h-6zM16 7h1v1h-1zM20 7h6v1h-6zM2 8h1v1h-1zM4 8h1v1h-1zM8 8h1v1h-1zM12 8h1v1h-1zM16 8h1v1h-1zM20 8h1v1h-1zM25 8h1v1h-1zM2 9h1v1h-1zM4 9h1v1h-1zM9 9h4v1h-4zM14 9h5v1h-5zM20 9h6v1h-6zM0 10h2v1h-2zM4 10h1v1h-1zM8 10h1v1h-1zM16 10h1v1h-1zM20 10h1v1h-1zM25 10h1v1h-1zM1 11h1v1h-1zM4 11h1v1h-1zM7 11h1v1h-1zM9 11h1v1h-1zM11 11h1v1h-1zM16 11h1v1h-1zM20 11h6v1h-6zM1 12h1v1h-1zM3 12h1v1h-1zM5 12h1v1h-1zM7 12h1v1h-1zM12 12h1v1h-1zM16 12h1v1h-1zM18 12h1v1h-1zM21 12h1v1h-1zM23 12h1v1h-1zM1 13h1v1h-1zM3 13h1v1h-1zM5 13h1v1h-1zM7 13h1v1h-1zM11 13h1v1h-1zM16 13h2v1h-2zM20 13h1v1h-1zM23 13h1v1h-1zM26 13h1v1h-1zM1 14h2v1h-2zM8 14h4v1h-4zM16 14h1v1h-1zM18 14h2v1h-2zM24 14h3v1h-3z"/></svg><svg class="a" style="left:0;top:0" width="600" height="60" shape-rendering="crispEdges"><path fill="#000" d="M361 41h1v1h-1zM360 42h1v1h-1zM360 43h1v1h-1zM359 44h1v1h-1zM358 45h1v1h-1zM358 46h1v1h-1zM358 47h1v1h-1zM358 48h1v1h-1zM358 49h1v1h-1zM359 50h1v1h-1zM360 51h1v1h-1zM360 52h1v1h-1zM361 53h1v1h-1zM362 42h7v1h-7zM365 43h1v1h-1zM365 44h1v1h-1zM365 45h1v1h-1zM365 46h1v1h-1zM365 47h1v1h-1zM365 48h1v1h-1zM365 49h1v1h-1zM365 50h1v1h-1zM362 52h9v1h-9zM370 41h1v1h-1zM371 42h1v1h-1zM371 43h1v1h-1zM372 44h1v1h-1zM373 45h1v1h-1zM373 46h1v1h-1zM373 47h1v1h-1zM373 48h1v1h-1zM373 49h1v1h-1zM372 50h1v1h-1zM371 51h1v1h-1zM371 52h1v1h-1zM370 53h1v1h-1z"/></svg><svg class="a" style="left:391px;top:37px" width="33" height="21" shape-rendering="crispEdges"><path fill="#000" d="M1 2h1v1h-1zM15 2h11v1h-11zM2 3h1v1h-1zM6 3h6v1h-6zM15 3h1v1h-1zM19 3h1v1h-1zM25 3h1v1h-1zM0 4h5v1h-5zM6 4h1v1h-1zM11 4h1v1h-1zM15 4h1v1h-1zM19 4h4v1h-4zM25 4h1v1h-1zM3 5h1v1h-1zM6 5h1v1h-1zM8 5h1v1h-1zM11 5h1v1h-1zM15 5h1v1h-1zM18 5h1v1h-1zM22 5h1v1h-1zM25 5h1v1h-1zM3 6h1v1h-1zM6 6h1v1h-1zM8 6h1v1h-1zM11 6h1v1h-1zM15 6h1v1h-1zM17 6h1v1h-1zM19 6h1v1h-1zM21 6h1v1h-1zM25 6h1v1h-1zM2 7h1v1h-1zM6 7h1v1h-1zM8 7h1v1h-1zM11 7h1v1h-1zM15 7h1v1h-1zM20 7h1v1h-1zM25 7h1v1h-1zM1 8h3v1h-3zM6 8h1v1h-1zM8 8h1v1h-1zM11 8h1v1h-1zM15 8h1v1h-1zM18 8h2v1h-2zM21 8h2v1h-2zM25 8h1v1h-1zM0 9h1v1h-1zM2 9h1v1h-1zM4 9h1v1h-1zM6 9h1v1h-1zM8 9h1v1h-1zM11 9h1v1h-1zM15 9h3v1h-3zM20 9h1v1h-1zM23 9h3v1h-3zM2 10h1v1h-1zM6 10h1v1h-1zM8 10h2v1h-2zM11 10h1v1h-1zM15 10h1v1h-1zM21 10h1v1h-1zM25 10h1v1h-1zM2 11h1v1h-1zM7 11h1v1h-1zM9 11h1v1h-1zM15 11h1v1h-1zM19 11h1v1h-1zM25 11h1v1h-1zM2 12h1v1h-1zM7 12h1v1h-1zM9 12h1v1h-1zM12 12h1v1h-1zM15 12h1v1h-1zM20 12h1v1h-1zM25 12h1v1h-1zM2 13h1v1h-1zM6 13h1v1h-1zM9 13h1v1h-1zM12 13h1v1h-1zM15 13h11v1h-11zM2 14h1v1h-1zM5 14h1v1h-1zM10 14h3v1h-3zM15 14h1v1h-1zM25 14h1v1h-1z"/></svg><svg class="a" style="left:0;top:0" width="600" height="60" shape-rendering="crispEdges"><path fill="#000" d="M425 41h1v1h-1zM424 42h1v1h-1zM424 43h1v1h-1zM423 44h1v1h-1zM422 45h1v1h-1zM422 46h1v1h-1zM422 47h1v1h-1zM422 48h1v1h-1zM422 49h1v1h-1zM423 50h1v1h-1zM424 51h1v1h-1zM424 52h1v1h-1zM425 53h1v1h-1zM426 42h1v1h-1zM432 42h1v1h-1zM426 43h1v1h-1zM432 43h1v1h-1zM426 44h1v1h-1zM432 44h1v1h-1zM427 45h1v1h-1zM431 45h1v1h-1zM427 46h1v1h-1zM431 46h1v1h-1zM428 47h1v1h-1zM430 47h1v1h-1zM428 48h1v1h-1zM430 48h1v1h-1zM429 49h1v1h-1zM429 50h1v1h-1zM426 52h9v1h-9zM434 41h1v1h-1zM435 42h1v1h-1zM435 43h1v1h-1zM436 44h1v1h-1zM437 45h1v1h-1zM437 46h1v1h-1zM437 47h1v1h-1zM437 48h1v1h-1zM437 49h1v1h-1zM436 50h1v1h-1zM435 51h1v1h-1zM435 52h1v1h-1zM434 53h1v1h-1z"/></svg><svg class="a" style="left:455px;top:37px" width="33" height="21" shape-rendering="crispEdges"><path fill="#000" d="M6 2h1v1h-1zM0 3h13v1h-13zM15 3h11v1h-11zM0 4h1v1h-1zM3 4h1v1h-1zM9 4h1v1h-1zM12 4h1v1h-1zM15 4h1v1h-1zM25 4h1v1h-1zM2 5h1v1h-1zM5 5h1v1h-1zM10 5h1v1h-1zM15 5h1v1h-1zM25 5h1v1h-1zM1 6h1v1h-1zM4 6h1v1h-1zM11 6h1v1h-1zM15 6h1v1h-1zM25 6h1v1h-1zM2 7h9v1h-9zM15 7h1v1h-1zM25 7h1v1h-1zM2 8h1v1h-1zM6 8h1v1h-1zM10 8h1v1h-1zM15 8h1v1h-1zM25 8h1v1h-1zM2 9h1v1h-1zM5 9h6v1h-6zM15 9h1v1h-1zM25 9h1v1h-1zM2 10h1v1h-1zM4 10h1v1h-1zM8 10h1v1h-1zM10 10h1v1h-1zM15 10h1v1h-1zM25 10h1v1h-1zM2 11h2v1h-2zM5 11h1v1h-1zM7 11h1v1h-1zM10 11h1v1h-1zM15 11h1v1h-1zM25 11h1v1h-1zM2 12h1v1h-1zM6 12h1v1h-1zM10 12h1v1h-1zM15 12h11v1h-11zM2 13h1v1h-1zM5 13h1v1h-1zM10 13h1v1h-1zM15 13h1v1h-1zM25 13h1v1h-1zM2 14h9v1h-9z"/></svg><svg class="a" style="left:0;top:0" width="600" height="60" shape-rendering="crispEdges"><path fill="#000" d="M489 41h1v1h-1zM488 42h1v1h-1zM488 43h1v1h-1zM487 44h1v1h-1zM486 45h1v1h-1zM486 46h1v1h-1zM486 47h1v1h-1zM486 48h1v1h-1zM486 49h1v1h-1zM487 50h1v1h-1zM488 51h1v1h-1zM488 52h1v1h-1zM489 53h1v1h-1zM490 42h1v1h-1zM495 42h1v1h-1zM500 42h1v1h-1zM490 43h1v1h-1zM495 43h1v1h-1zM500 43h1v1h-1zM490 44h1v1h-1zM494 44h1v1h-1zM496 44h1v1h-1zM500 44h1v1h-1zM491 45h1v1h-1zM494 45h1v1h-1zM496 45h1v1h-1zM499 45h1v1h-1zM491 46h1v1h-1zM493 46h1v1h-1zM497 46h1v1h-1zM499 46h1v1h-1zM491 47h1v1h-1zM493 47h1v1h-1zM497 47h1v1h-1zM499 47h1v1h-1zM491 48h1v1h-1zM493 48h1v1h-1zM497 48h1v1h-1zM499 48h1v1h-1zM492 49h1v1h-1zM498 49h1v1h-1zM492 50h1v1h-1zM498 50h1v1h-1zM490 52h13v1h-13zM502 41h1v1h-1zM503 42h1v1h-1zM503 43h1v1h-1zM504 44h1v1h-1zM505 45h1v1h-1zM505 46h1v1h-1zM505 47h1v1h-1zM505 48h1v1h-1zM505 49h1v1h-1zM504 50h1v1h-1zM503 51h1v1h-1zM503 52h1v1h-1zM502 53h1v1h-1z"/></svg><svg class="a" style="left:522px;top:37px" width="33" height="21" shape-rendering="crispEdges"><path fill="#000" d="M3 2h1v1h-1zM22 2h1v1h-1zM0 3h7v1h-7zM8 3h5v1h-5zM15 3h4v1h-4zM22 3h1v1h-1zM3 4h1v1h-1zM8 4h1v1h-1zM12 4h1v1h-1zM15 4h1v1h-1zM18 4h1v1h-1zM22 4h1v1h-1zM1 5h5v1h-5zM8 5h1v1h-1zM11 5h1v1h-1zM15 5h1v1h-1zM18 5h1v1h-1zM20 5h6v1h-6zM3 6h1v1h-1zM8 6h1v1h-1zM12 6h1v1h-1zM15 6h4v1h-4zM22 6h1v1h-1zM25 6h1v1h-1zM0 7h7v1h-7zM8 7h1v1h-1zM10 7h1v1h-1zM12 7h1v1h-1zM15 7h1v1h-1zM18 7h1v1h-1zM22 7h1v1h-1zM25 7h1v1h-1zM2 8h1v1h-1zM8 8h1v1h-1zM11 8h1v1h-1zM15 8h1v1h-1zM18 8h1v1h-1zM22 8h1v1h-1zM25 8h1v1h-1zM1 9h1v1h-1zM6 9h1v1h-1zM8 9h1v1h-1zM15 9h4v1h-4zM22 9h1v1h-1zM25 9h1v1h-1zM0 10h1v1h-1zM2 10h9v1h-9zM15 10h1v1h-1zM18 10h1v1h-1zM22 10h1v1h-1zM25 10h1v1h-1zM2 11h1v1h-1zM6 11h1v1h-1zM10 11h1v1h-1zM15 11h1v1h-1zM18 11h1v1h-1zM21 11h1v1h-1zM25 11h1v1h-1zM2 12h1v1h-1zM6 12h1v1h-1zM10 12h1v1h-1zM15 12h1v1h-1zM17 12h3v1h-3zM21 12h1v1h-1zM25 12h1v1h-1zM2 13h1v1h-1zM6 13h1v1h-1zM9 13h2v1h-2zM14 13h3v1h-3zM20 13h1v1h-1zM23 13h1v1h-1zM25 13h1v1h-1zM6 14h1v1h-1zM19 14h1v1h-1zM24 14h1v1h-1z"/></svg><svg class="a" style="left:0;top:0" width="600" height="60" shape-rendering="crispEdges"><path fill="#000" d="M556 41h1v1h-1zM555 42h1v1h-1zM555 43h1v1h-1zM554 44h1v1h-1zM553 45h1v1h-1zM553 46h1v1h-1zM553 47h1v1h-1zM553 48h1v1h-1zM553 49h1v1h-1zM554 50h1v1h-1zM555 51h1v1h-1zM555 52h1v1h-1zM556 53h1v1h-1zM557 42h1v1h-1zM563 42h1v1h-1zM557 43h1v1h-1zM563 43h1v1h-1zM557 44h1v1h-1zM563 44h1v1h-1zM557 45h1v1h-1zM563 45h1v1h-1zM557 46h7v1h-7zM557 47h1v1h-1zM563 47h1v1h-1zM557 48h1v1h-1zM563 48h1v1h-1zM557 49h1v1h-1zM563 49h1v1h-1zM557 50h1v1h-1zM563 50h1v1h-1zM557 52h9v1h-9zM565 41h1v1h-1zM566 42h1v1h-1zM566 43h1v1h-1zM567 44h1v1h-1zM568 45h1v1h-1zM568 46h1v1h-1zM568 47h1v1h-1zM568 48h1v1h-1zM568 49h1v1h-1zM567 50h1v1h-1zM566 51h1v1h-1zM566 52h1v1h-1zM565 53h1v1h-1z"/></svg><svg class="a" style="left:161px;top:71px" width="32" height="19" shape-rendering="crispEdges"><path fill="#000" d="M0 2h5v1h-5zM6 2h5v1h-5zM15 2h1v1h-1zM18 2h1v1h-1zM4 3h1v1h-1zM10 3h1v1h-1zM15 3h1v1h-1zM18 3h1v1h-1zM1 4h1v1h-1zM4 4h1v1h-1zM7 4h1v1h-1zM10 4h1v1h-1zM14 4h1v1h-1zM18 4h1v1h-1zM21 4h1v1h-1zM2 5h1v1h-1zM4 5h1v1h-1zM8 5h1v1h-1zM10 5h1v1h-1zM14 5h1v1h-1zM18 5h1v1h-1zM20 5h1v1h-1zM4 6h1v1h-1zM9 6h2v1h-2zM13 6h2v1h-2zM18 6h2v1h-2zM24 6h1v1h-1zM3 7h2v1h-2zM8 7h1v1h-1zM10 7h1v1h-1zM12 7h1v1h-1zM14 7h1v1h-1zM18 7h1v1h-1zM24 7h1v1h-1zM2 8h1v1h-1zM4 8h1v1h-1zM7 8h1v1h-1zM10 8h1v1h-1zM14 8h1v1h-1zM17 8h2v1h-2zM1 9h1v1h-1zM4 9h1v1h-1zM6 9h1v1h-1zM10 9h1v1h-1zM14 9h1v1h-1zM16 9h1v1h-1zM18 9h1v1h-1zM0 10h1v1h-1zM4 10h1v1h-1zM10 10h1v1h-1zM14 10h1v1h-1zM18 10h1v1h-1zM22 10h1v1h-1zM24 10h1v1h-1zM2 11h1v1h-1zM4 11h1v1h-1zM8 11h1v1h-1zM10 11h1v1h-1zM14 11h1v1h-1zM18 11h1v1h-1zM22 11h1v1h-1zM24 11h1v1h-1zM3 12h1v1h-1zM9 12h1v1h-1zM14 12h1v1h-1zM19 12h4v1h-4z"/></svg><div class="t" style="left:194px;top:74px;font-size:11px;color:#000">0 px</div><svg class="a" style="left:258px;top:71px" width="53" height="19" shape-rendering="crispEdges"><path fill="#a8a8a0" d="M1 2h1v1h-1zM4 2h1v1h-1zM7 2h1v1h-1zM10 2h1v1h-1zM12 2h4v1h-4zM19 2h1v1h-1zM25 2h1v1h-1zM29 2h6v1h-6zM41 2h1v1h-1zM2 3h1v1h-1zM5 3h1v1h-1zM7 3h1v1h-1zM9 3h1v1h-1zM12 3h1v1h-1zM15 3h1v1h-1zM18 3h1v1h-1zM20 3h1v1h-1zM25 3h1v1h-1zM29 3h1v1h-1zM34 3h1v1h-1zM38 3h1v1h-1zM41 3h5v1h-5zM0 4h1v1h-1zM7 4h1v1h-1zM12 4h1v1h-1zM14 4h1v1h-1zM17 4h1v1h-1zM21 4h1v1h-1zM25 4h5v1h-5zM34 4h1v1h-1zM38 4h1v1h-1zM41 4h1v1h-1zM1 5h1v1h-1zM3 5h1v1h-1zM5 5h6v1h-6zM12 5h2v1h-2zM16 5h1v1h-1zM18 5h3v1h-3zM22 5h1v1h-1zM24 5h1v1h-1zM29 5h6v1h-6zM36 5h11v1h-11zM3 6h1v1h-1zM5 6h1v1h-1zM10 6h1v1h-1zM12 6h1v1h-1zM14 6h1v1h-1zM19 6h1v1h-1zM24 6h6v1h-6zM32 6h1v1h-1zM2 7h1v1h-1zM5 7h6v1h-6zM12 7h1v1h-1zM15 7h8v1h-8zM26 7h1v1h-1zM29 7h6v1h-6zM37 7h1v1h-1zM41 7h1v1h-1zM45 7h1v1h-1zM2 8h1v1h-1zM5 8h1v1h-1zM10 8h1v1h-1zM12 8h1v1h-1zM15 8h1v1h-1zM19 8h1v1h-1zM24 8h6v1h-6zM32 8h1v1h-1zM37 8h1v1h-1zM41 8h1v1h-1zM45 8h1v1h-1zM0 9h2v1h-2zM5 9h6v1h-6zM12 9h3v1h-3zM17 9h1v1h-1zM19 9h1v1h-1zM21 9h1v1h-1zM26 9h1v1h-1zM29 9h6v1h-6zM37 9h1v1h-1zM40 9h1v1h-1zM42 9h1v1h-1zM45 9h1v1h-1zM1 10h1v1h-1zM5 10h1v1h-1zM10 10h1v1h-1zM12 10h1v1h-1zM16 10h1v1h-1zM19 10h1v1h-1zM22 10h1v1h-1zM26 10h1v1h-1zM28 10h1v1h-1zM30 10h1v1h-1zM34 10h1v1h-1zM37 10h1v1h-1zM39 10h1v1h-1zM43 10h1v1h-1zM45 10h1v1h-1zM1 11h1v1h-1zM5 11h1v1h-1zM10 11h1v1h-1zM12 11h1v1h-1zM15 11h1v1h-1zM19 11h1v1h-1zM22 11h1v1h-1zM26 11h2v1h-2zM30 11h5v1h-5zM37 11h1v1h-1zM45 11h1v1h-1zM1 12h1v1h-1zM5 12h1v1h-1zM9 12h2v1h-2zM12 12h1v1h-1zM18 12h2v1h-2zM26 12h1v1h-1zM30 12h1v1h-1zM34 12h1v1h-1zM37 12h9v1h-9z"/></svg><svg class="a" style="left:324px;top:71px" width="32" height="19" shape-rendering="crispEdges"><path fill="#000" d="M2 2h1v1h-1zM5 2h1v1h-1zM9 2h1v1h-1zM18 2h1v1h-1zM20 2h1v1h-1zM2 3h1v1h-1zM6 3h1v1h-1zM8 3h1v1h-1zM18 3h1v1h-1zM21 3h1v1h-1zM0 4h11v1h-11zM18 4h1v1h-1zM2 5h1v1h-1zM7 5h1v1h-1zM12 5h11v1h-11zM1 6h3v1h-3zM5 6h5v1h-5zM18 6h1v1h-1zM24 6h1v1h-1zM1 7h2v1h-2zM7 7h1v1h-1zM13 7h4v1h-4zM18 7h1v1h-1zM24 7h1v1h-1zM0 8h1v1h-1zM2 8h1v1h-1zM7 8h1v1h-1zM15 8h1v1h-1zM18 8h1v1h-1zM2 9h1v1h-1zM4 9h7v1h-7zM15 9h1v1h-1zM19 9h1v1h-1zM2 10h1v1h-1zM7 10h1v1h-1zM15 10h1v1h-1zM19 10h1v1h-1zM22 10h1v1h-1zM24 10h1v1h-1zM2 11h1v1h-1zM7 11h1v1h-1zM15 11h2v1h-2zM20 11h1v1h-1zM22 11h1v1h-1zM24 11h1v1h-1zM2 12h1v1h-1zM7 12h1v1h-1zM12 12h3v1h-3zM21 12h2v1h-2z"/></svg><svg class="a" style="left:379px;top:72px" width="29" height="19" shape-rendering="crispEdges"><path fill="#000" d="M14 2h1v1h-1zM17 2h1v1h-1zM20 2h1v1h-1zM0 3h11v1h-11zM13 3h10v1h-10zM5 4h1v1h-1zM13 4h1v1h-1zM22 4h1v1h-1zM5 5h1v1h-1zM12 5h1v1h-1zM15 5h6v1h-6zM22 5h1v1h-1zM2 6h1v1h-1zM5 6h1v1h-1zM15 6h1v1h-1zM20 6h1v1h-1zM2 7h1v1h-1zM5 7h5v1h-5zM15 7h6v1h-6zM2 8h1v1h-1zM5 8h1v1h-1zM17 8h1v1h-1zM2 9h1v1h-1zM5 9h1v1h-1zM14 9h8v1h-8zM2 10h1v1h-1zM5 10h1v1h-1zM14 10h1v1h-1zM17 10h1v1h-1zM21 10h1v1h-1zM2 11h1v1h-1zM5 11h1v1h-1zM14 11h1v1h-1zM17 11h1v1h-1zM20 11h2v1h-2zM0 12h11v1h-11zM17 12h1v1h-1z"/></svg><svg class="a" style="left:472px;top:71px" width="32" height="19" shape-rendering="crispEdges"><path fill="#f2f2f2" transform="translate(1,1)" d="M5 2h1v1h-1zM17 2h1v1h-1zM0 3h11v1h-11zM13 3h10v1h-10zM0 4h1v1h-1zM3 4h1v1h-1zM7 4h1v1h-1zM10 4h1v1h-1zM13 4h1v1h-1zM16 4h1v1h-1zM19 4h1v1h-1zM1 5h9v1h-9zM13 5h9v1h-9zM3 6h1v1h-1zM7 6h1v1h-1zM13 6h1v1h-1zM16 6h1v1h-1zM19 6h1v1h-1zM24 6h1v1h-1zM2 7h7v1h-7zM13 7h1v1h-1zM16 7h4v1h-4zM24 7h1v1h-1zM2 8h1v1h-1zM5 8h1v1h-1zM8 8h1v1h-1zM13 8h1v1h-1zM2 9h1v1h-1zM5 9h1v1h-1zM8 9h1v1h-1zM13 9h1v1h-1zM15 9h6v1h-6zM2 10h1v1h-1zM4 10h1v1h-1zM6 10h1v1h-1zM8 10h1v1h-1zM10 10h1v1h-1zM13 10h1v1h-1zM16 10h1v1h-1zM19 10h1v1h-1zM24 10h1v1h-1zM3 11h1v1h-1zM6 11h1v1h-1zM10 11h1v1h-1zM12 11h1v1h-1zM17 11h2v1h-2zM24 11h1v1h-1zM0 12h3v1h-3zM7 12h4v1h-4zM12 12h1v1h-1zM14 12h3v1h-3zM19 12h3v1h-3z"/><path fill="#a8a8a0" d="M5 2h1v1h-1zM17 2h1v1h-1zM0 3h11v1h-11zM13 3h10v1h-10zM0 4h1v1h-1zM3 4h1v1h-1zM7 4h1v1h-1zM10 4h1v1h-1zM13 4h1v1h-1zM16 4h1v1h-1zM19 4h1v1h-1zM1 5h9v1h-9zM13 5h9v1h-9zM3 6h1v1h-1zM7 6h1v1h-1zM13 6h1v1h-1zM16 6h1v1h-1zM19 6h1v1h-1zM24 6h1v1h-1zM2 7h7v1h-7zM13 7h1v1h-1zM16 7h4v1h-4zM24 7h1v1h-1zM2 8h1v1h-1zM5 8h1v1h-1zM8 8h1v1h-1zM13 8h1v1h-1zM2 9h1v1h-1zM5 9h1v1h-1zM8 9h1v1h-1zM13 9h1v1h-1zM15 9h6v1h-6zM2 10h1v1h-1zM4 10h1v1h-1zM6 10h1v1h-1zM8 10h1v1h-1zM10 10h1v1h-1zM13 10h1v1h-1zM16 10h1v1h-1zM19 10h1v1h-1zM24 10h1v1h-1zM3 11h1v1h-1zM6 11h1v1h-1zM10 11h1v1h-1zM12 11h1v1h-1zM17 11h2v1h-2zM24 11h1v1h-1zM0 12h3v1h-3zM7 12h4v1h-4zM12 12h1v1h-1zM14 12h3v1h-3zM19 12h3v1h-3z"/></svg><svg class="a" style="left:583px;top:71px" width="32" height="19" shape-rendering="crispEdges"><path fill="#f2f2f2" transform="translate(1,1)" d="M5 2h1v1h-1zM17 2h1v1h-1zM0 3h11v1h-11zM13 3h10v1h-10zM13 4h1v1h-1zM16 4h1v1h-1zM19 4h1v1h-1zM3 5h5v1h-5zM13 5h9v1h-9zM3 6h1v1h-1zM7 6h1v1h-1zM13 6h1v1h-1zM16 6h1v1h-1zM19 6h1v1h-1zM24 6h1v1h-1zM1 7h9v1h-9zM13 7h1v1h-1zM16 7h4v1h-4zM24 7h1v1h-1zM1 8h1v1h-1zM9 8h1v1h-1zM13 8h1v1h-1zM1 9h1v1h-1zM3 9h5v1h-5zM9 9h1v1h-1zM13 9h1v1h-1zM15 9h6v1h-6zM1 10h1v1h-1zM3 10h1v1h-1zM7 10h1v1h-1zM9 10h1v1h-1zM13 10h1v1h-1zM16 10h1v1h-1zM19 10h1v1h-1zM24 10h1v1h-1zM1 11h1v1h-1zM3 11h5v1h-5zM9 11h1v1h-1zM12 11h1v1h-1zM17 11h2v1h-2zM24 11h1v1h-1zM1 12h1v1h-1zM8 12h2v1h-2zM12 12h1v1h-1zM14 12h3v1h-3zM19 12h3v1h-3z"/><path fill="#a8a8a0" d="M5 2h1v1h-1zM17 2h1v1h-1zM0 3h11v1h-11zM13 3h10v1h-10zM13 4h1v1h-1zM16 4h1v1h-1zM19 4h1v1h-1zM3 5h5v1h-5zM13 5h9v1h-9zM3 6h1v1h-1zM7 6h1v1h-1zM13 6h1v1h-1zM16 6h1v1h-1zM19 6h1v1h-1zM24 6h1v1h-1zM1 7h9v1h-9zM13 7h1v1h-1zM16 7h4v1h-4zM24 7h1v1h-1zM1 8h1v1h-1zM9 8h1v1h-1zM13 8h1v1h-1zM1 9h1v1h-1zM3 9h5v1h-5zM9 9h1v1h-1zM13 9h1v1h-1zM15 9h6v1h-6zM1 10h1v1h-1zM3 10h1v1h-1zM7 10h1v1h-1zM9 10h1v1h-1zM13 10h1v1h-1zM16 10h1v1h-1zM19 10h1v1h-1zM24 10h1v1h-1zM1 11h1v1h-1zM3 11h5v1h-5zM9 11h1v1h-1zM12 11h1v1h-1zM17 11h2v1h-2zM24 11h1v1h-1zM1 12h1v1h-1zM8 12h2v1h-2zM12 12h1v1h-1zM14 12h3v1h-3zM19 12h3v1h-3z"/></svg><svg class="a" style="left:685px;top:70px" width="63" height="19" shape-rendering="crispEdges"><path fill="#9c9a8c" d="M1 2h1v1h-1zM4 2h7v1h-7zM15 2h1v1h-1zM19 2h1v1h-1zM25 2h1v1h-1zM31 2h1v1h-1zM38 2h1v1h-1zM41 2h5v1h-5zM2 3h1v1h-1zM4 3h1v1h-1zM7 3h1v1h-1zM10 3h1v1h-1zM12 3h11v1h-11zM26 3h1v1h-1zM31 3h1v1h-1zM38 3h1v1h-1zM41 3h1v1h-1zM45 3h1v1h-1zM4 4h1v1h-1zM6 4h3v1h-3zM10 4h1v1h-1zM13 4h1v1h-1zM15 4h1v1h-1zM17 4h1v1h-1zM19 4h1v1h-1zM21 4h1v1h-1zM26 4h1v1h-1zM28 4h7v1h-7zM37 4h1v1h-1zM40 4h5v1h-5zM0 5h3v1h-3zM4 5h1v1h-1zM7 5h1v1h-1zM10 5h1v1h-1zM13 5h5v1h-5zM20 5h1v1h-1zM31 5h1v1h-1zM34 5h1v1h-1zM37 5h1v1h-1zM39 5h1v1h-1zM44 5h1v1h-1zM2 6h1v1h-1zM4 6h7v1h-7zM14 6h3v1h-3zM19 6h1v1h-1zM21 6h1v1h-1zM24 6h3v1h-3zM31 6h1v1h-1zM34 6h1v1h-1zM36 6h3v1h-3zM40 6h7v1h-7zM2 7h1v1h-1zM4 7h1v1h-1zM10 7h1v1h-1zM13 7h1v1h-1zM15 7h1v1h-1zM17 7h2v1h-2zM22 7h1v1h-1zM26 7h1v1h-1zM31 7h1v1h-1zM34 7h1v1h-1zM38 7h1v1h-1zM41 7h1v1h-1zM43 7h1v1h-1zM46 7h1v1h-1zM2 8h1v1h-1zM4 8h1v1h-1zM6 8h3v1h-3zM10 8h1v1h-1zM13 8h9v1h-9zM26 8h1v1h-1zM30 8h1v1h-1zM34 8h1v1h-1zM37 8h1v1h-1zM40 8h1v1h-1zM42 8h2v1h-2zM45 8h1v1h-1zM2 9h1v1h-1zM4 9h1v1h-1zM6 9h1v1h-1zM8 9h1v1h-1zM10 9h1v1h-1zM17 9h1v1h-1zM26 9h1v1h-1zM29 9h1v1h-1zM34 9h1v1h-1zM36 9h4v1h-4zM41 9h1v1h-1zM43 9h2v1h-2zM2 10h3v1h-3zM6 10h3v1h-3zM10 10h1v1h-1zM14 10h1v1h-1zM17 10h4v1h-4zM26 10h1v1h-1zM28 10h1v1h-1zM32 10h2v1h-2zM40 10h1v1h-1zM42 10h1v1h-1zM44 10h2v1h-2zM50 10h1v1h-1zM54 10h1v1h-1zM57 10h1v1h-1zM2 11h1v1h-1zM4 11h1v1h-1zM10 11h1v1h-1zM14 11h1v1h-1zM17 11h1v1h-1zM25 11h1v1h-1zM27 11h1v1h-1zM38 11h2v1h-2zM41 11h1v1h-1zM44 11h1v1h-1zM46 11h1v1h-1zM50 11h1v1h-1zM54 11h1v1h-1zM57 11h1v1h-1zM3 12h1v1h-1zM8 12h3v1h-3zM12 12h11v1h-11zM24 12h1v1h-1zM28 12h7v1h-7zM36 12h2v1h-2zM42 12h2v1h-2z"/></svg>
</body></html>
